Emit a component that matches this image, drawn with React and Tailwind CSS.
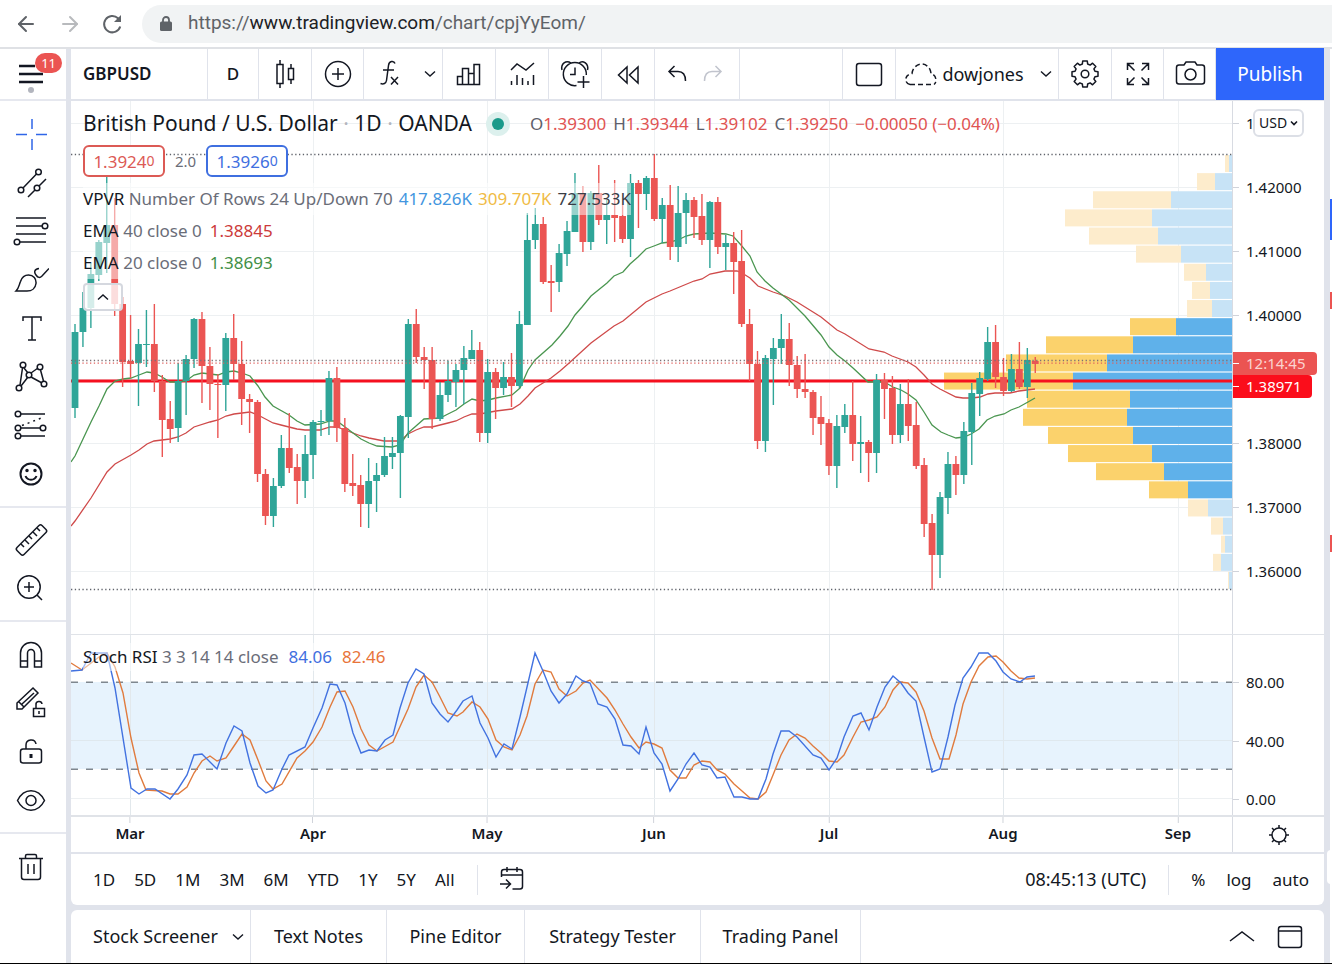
import { ArrowLeft, ArrowRight } from 'lucide-react';

// Candles are evenly spaced, one per trading day: [high, bodyTop, bodyBottom, low, up]
const FIRST_X = 75;
const STEP = 7.936;
const candles = [
  [324, 332, 408, 418, 1], [292, 308, 332, 347, 1], [263, 274, 308, 328, 1], [240, 242, 275, 281, 1],
  [177, 225, 243, 273, 1], [198, 225, 304, 316, 0], [297, 304, 362, 387, 0], [315, 361, 364, 378, 0],
  [329, 344, 363, 406, 1], [310, 344, 345, 367, 1], [304, 344, 381, 392, 0], [375, 381, 420, 457, 0],
  [401, 419, 429, 443, 0], [363, 381, 428, 442, 1], [355, 359, 381, 415, 1], [318, 319, 359, 368, 1],
  [312, 319, 366, 403, 0], [347, 366, 384, 410, 0], [374, 384, 385, 438, 0], [333, 338, 385, 411, 1],
  [314, 338, 364, 380, 0], [341, 364, 399, 425, 0], [394, 399, 402, 433, 0], [400, 402, 474, 482, 0],
  [469, 474, 516, 525, 0], [478, 486, 516, 527, 1], [435, 448, 486, 488, 1], [413, 448, 468, 473, 0],
  [454, 467, 481, 504, 0], [435, 454, 481, 498, 1], [420, 422, 455, 479, 1], [410, 421, 422, 436, 1],
  [371, 378, 421, 435, 1], [367, 378, 428, 442, 0], [418, 428, 484, 492, 0], [454, 483, 486, 496, 0],
  [475, 485, 504, 527, 0], [458, 481, 504, 528, 1], [463, 475, 481, 512, 1], [437, 456, 475, 477, 1],
  [437, 453, 457, 469, 1], [415, 416, 453, 498, 1], [319, 324, 417, 438, 1], [309, 324, 357, 363, 0],
  [347, 357, 360, 389, 0], [347, 360, 419, 429, 0], [382, 395, 419, 421, 1], [361, 381, 395, 402, 1],
  [364, 370, 382, 407, 1], [346, 358, 370, 404, 1], [330, 350, 359, 359, 1], [342, 350, 433, 442, 0],
  [359, 372, 433, 443, 1], [368, 372, 388, 419, 0], [362, 377, 388, 395, 1], [353, 377, 386, 407, 0],
  [311, 324, 386, 388, 1], [213, 240, 325, 325, 1], [208, 224, 240, 249, 1], [217, 224, 282, 284, 0],
  [265, 281, 283, 312, 0], [244, 253, 282, 292, 1], [221, 231, 254, 266, 1], [173, 193, 232, 232, 1],
  [186, 193, 242, 252, 0], [191, 193, 242, 250, 1], [165, 193, 220, 225, 0], [200, 215, 220, 244, 1],
  [180, 215, 218, 242, 0], [205, 216, 239, 243, 0], [174, 183, 239, 257, 1], [180, 183, 194, 228, 0],
  [176, 178, 194, 210, 1], [154, 178, 219, 221, 0], [198, 205, 219, 243, 1], [185, 205, 247, 260, 0],
  [186, 213, 247, 262, 1], [193, 200, 213, 244, 1], [197, 200, 217, 238, 0], [194, 216, 240, 245, 0],
  [201, 202, 240, 268, 1], [197, 202, 247, 254, 0], [235, 243, 247, 270, 1], [232, 243, 262, 294, 0],
  [230, 261, 324, 327, 0], [309, 324, 364, 381, 0], [351, 364, 441, 449, 0], [355, 358, 441, 452, 1],
  [338, 348, 359, 405, 1], [314, 339, 348, 364, 1], [323, 339, 365, 386, 0], [356, 365, 389, 398, 0],
  [354, 389, 392, 398, 0], [390, 392, 418, 435, 0], [396, 417, 424, 445, 0], [419, 423, 466, 475, 0],
  [415, 426, 466, 488, 1], [404, 415, 427, 433, 1], [381, 415, 444, 461, 0], [416, 442, 444, 473, 1],
  [440, 442, 453, 482, 0], [374, 380, 453, 473, 1], [373, 380, 389, 419, 0], [376, 388, 435, 444, 0],
  [384, 404, 435, 443, 1], [379, 404, 426, 441, 0], [402, 425, 466, 469, 0], [458, 465, 524, 537, 0],
  [514, 523, 555, 590, 0], [492, 497, 555, 578, 1], [452, 464, 498, 514, 1], [456, 464, 475, 495, 0],
  [422, 431, 475, 484, 1], [383, 393, 432, 465, 1], [372, 378, 394, 416, 1], [327, 342, 379, 381, 1],
  [325, 342, 377, 388, 0], [358, 377, 391, 396, 0], [354, 369, 391, 392, 1], [342, 369, 387, 389, 0],
  [348, 360, 387, 398, 1], [357, 361, 364, 373, 0],
];

const ema20 =
  '71,462 75,456 83,439 91,422 99,406 107,389 115,381 123,379 131,378 139,375 147,372 154,373 162,377 170,382 178,382 186,381 194,375 202,373 218,375 226,372 234,371 242,373 250,376 258,386 265,397 273,406 289,415 297,421 305,425 320,424 330,421 337,421 345,427 361,439 369,443 377,446 392,447 400,445 408,433 416,426 424,419 440,418 448,414 456,410 464,404 472,399 480,401 488,400 496,398 512,395 520,388 528,370 535,360 552,345 560,336 568,326 575,315 582,307 591,296 607,283 614,276 623,272 630,264 638,257 646,249 654,246 662,243 670,242 678,240 686,236 694,234 710,233 726,234 733,236 741,245 750,256 757,272 765,281 773,288 789,300 805,316 821,335 829,347 837,355 845,361 853,368 868,382 884,382 893,387 901,390 908,394 916,400 924,412 932,425 941,432 948,435 956,438 964,437 971,434 979,429 987,420 995,416 1004,414 1011,410 1019,407 1028,402 1035,398';
const ema40 =
  '71,526 75,521 91,498 107,472 115,464 131,455 139,450 147,444 154,441 162,440 170,439 178,437 186,433 194,427 210,422 218,420 226,416 234,414 250,412 258,415 273,423 281,425 297,429 305,430 320,430 330,427 337,427 345,430 361,436 369,438 384,441 400,441 408,434 416,430 424,427 432,427 440,425 448,423 456,421 464,417 472,414 480,414 496,411 512,409 520,404 528,396 535,388 551,378 560,371 568,364 591,343 614,326 623,321 646,302 662,294 670,291 694,281 702,279 710,274 725,271 737,271 742,273 750,278 758,286 773,292 785,296 797,302 821,317 837,330 845,334 869,349 884,352 892,356 908,362 916,367 924,375 932,384 940,389 956,397 963,398 972,398 980,397 988,394 995,393 1010,393 1019,391 1035,389';

// Volume profile rows: [left edge of down volume, left edge of up volume]
const ROW_TOP = 155;
const ROW_STEP = 18.13;
const profile = [
  [1225, 1229], [1197, 1215], [1093, 1171], [1065, 1152], [1089, 1158], [1136, 1181], [1184, 1206], [1192, 1210],
  [1187, 1212], [1130, 1176], [1046, 1133], [1006, 1107], [944, 1073], [1027, 1130], [1023, 1127], [1048, 1133],
  [1068, 1152], [1096, 1164], [1149, 1188], [1188, 1208], [1211, 1223], [1221, 1225], [1213, 1221], [1228, 1229],
];

const stochK =
  '71,671 82,670 91,653 107,653 115,688 131,788 139,794 147,789 155,789 170,799 178,789 187,775 194,755 202,754 217,769 226,743 234,726 242,731 250,763 258,786 266,793 273,790 282,769 289,755 305,747 313,728 322,708 330,684 337,685 345,703 353,733 361,753 369,750 377,751 385,740 393,735 400,708 408,683 416,669 424,674 432,703 440,714 448,722 457,710 463,701 472,696 480,723 488,738 496,757 504,744 512,749 520,717 535,653 543,671 551,691 559,703 567,694 576,676 583,681 590,683 598,704 607,707 615,719 623,745 631,746 639,754 646,727 654,753 662,764 670,791 678,779 686,764 694,753 702,765 710,767 717,778 725,777 734,797 742,797 750,799 758,799 766,779 773,754 781,731 789,731 797,737 813,755 821,758 829,770 837,758 844,737 853,716 861,713 869,730 877,707 885,687 893,676 901,683 908,693 916,701 924,737 932,772 940,769 948,737 955,705 963,678 971,667 979,653 988,653 996,661 1003,672 1011,679 1020,682 1027,677 1035,676';
const stochD =
  '71,663 82,670 99,657 107,653 115,667 123,693 131,738 139,773 146,790 162,791 170,794 178,794 187,787 194,773 202,761 210,756 217,761 226,758 234,746 242,734 250,740 258,760 266,781 273,789 282,784 297,758 305,751 313,742 322,727 330,707 337,692 345,691 353,707 361,729 369,745 377,751 393,742 408,709 416,687 424,675 432,682 440,697 448,713 457,716 463,712 472,702 480,707 488,719 496,740 504,747 512,750 520,735 527,716 535,684 543,670 551,672 559,689 567,696 576,691 583,683 590,680 607,698 615,710 623,724 631,737 639,748 646,742 654,744 662,748 670,770 678,778 686,778 694,765 702,761 710,762 717,770 725,774 734,784 742,791 750,798 758,799 766,792 773,775 781,755 789,740 797,734 805,738 813,746 821,753 829,761 837,762 844,755 853,737 861,722 869,720 877,717 885,707 893,690 900,682 908,683 916,692 924,711 932,738 940,759 949,759 956,735 963,704 971,682 979,666 988,657 996,656 1003,662 1011,671 1019,678 1027,679 1035,678';

const months = [
  { name: 'Mar', x: 130 },
  { name: 'Apr', x: 313 },
  { name: 'May', x: 487 },
  { name: 'Jun', x: 654 },
  { name: 'Jul', x: 829 },
  { name: 'Aug', x: 1003 },
  { name: 'Sep', x: 1178 },
];

const prices = [
  { label: '1.43000', y: 123 },
  { label: '1.42000', y: 187 },
  { label: '1.41000', y: 251 },
  { label: '1.40000', y: 315 },
  { label: '1.38000', y: 443 },
  { label: '1.37000', y: 507 },
  { label: '1.36000', y: 571 },
];

const stochLevels = [
  { label: '80.00', y: 682 },
  { label: '40.00', y: 741 },
  { label: '0.00', y: 799 },
];

// Eight-toothed gear outline around the middle of the icon box
const gearPoints = [];
for (let i = 0; i < 8; i++) {
  [[-15, 10.3], [-10, 13.2], [10, 13.2], [15, 10.3]].forEach(([turn, r]) => {
    const a = ((i * 45 + turn) * Math.PI) / 180;
    gearPoints.push(`${(18 + r * Math.cos(a)).toFixed(2)},${(18 + r * Math.sin(a)).toFixed(2)}`);
  });
}

function Icon({ children, className = '', width = 1.5 }) {
  return (
    <svg
      width="36"
      height="36"
      viewBox="0 0 36 36"
      fill="none"
      stroke="currentColor"
      strokeWidth={width}
      className={`shrink-0 ${className}`}
      aria-hidden="true"
    >
      {children}
    </svg>
  );
}

function Chevron({ up = false }) {
  return (
    <svg width="12" height="8" viewBox="0 0 12 8" fill="none" stroke="currentColor" strokeWidth="1.400" aria-hidden="true">
      <path d={up ? 'M1 6.500 6 2l5 4.500' : 'M1 1.500 6 6l5-4.500'} />
    </svg>
  );
}

const drawingTools = [
  {
    label: 'Cross',
    active: true,
    icon: <path d="M19 3v10M19 23v11M3 18.500h11M23 18.500h11" />,
  },
  {
    label: 'Trend line tools',
    icon: (
      <>
        <circle cx="25.500" cy="7" r="2.800" />
        <circle cx="8" cy="25" r="2.800" />
        <circle cx="24" cy="23" r="2.800" />
        <path d="M10 23 23.500 9M15 32l7-7M26 21l7-7" />
      </>
    ),
  },
  {
    label: 'Gann and Fibonacci tools',
    icon: (
      <>
        <path d="M3 5h30M3 13h26M3 21h30M7 29h26" />
        <circle cx="32" cy="13" r="2.800" />
        <circle cx="4" cy="29" r="2.800" />
      </>
    ),
  },
  {
    label: 'Brush',
    icon: (
      <path d="M3 29c3-3 3-6 4.500-9.500C9 15 12 13 15.500 13c5 0 8 4 7.500 8.500-.5 4.500-4 7.500-9 7.500H3ZM26 6.500c-5 .5-5 4-3 6.500 2 3 4 3 6 1l7-7.500" />
    ),
  },
  {
    label: 'Text',
    icon: <path d="M10 11V7h18v4M19 7v23M15 30h8" />,
  },
  {
    label: 'Patterns',
    icon: (
      <>
        <circle cx="10" cy="6" r="2.800" />
        <circle cx="27" cy="8" r="2.800" />
        <circle cx="16" cy="16" r="2.800" />
        <circle cx="6" cy="29" r="2.800" />
        <circle cx="31" cy="25" r="2.800" />
        <path d="M11 9l4 5M18 14l7-5M9.500 9 7 26M8 27l7-9M18 18l11 6M27.500 11l3 11" />
      </>
    ),
  },
  {
    label: 'Prediction and measurement tools',
    icon: (
      <>
        <circle cx="5" cy="7" r="2.800" />
        <circle cx="5" cy="21" r="2.800" />
        <circle cx="5" cy="29" r="2.800" />
        <circle cx="30" cy="21" r="2.800" />
        <path d="M8 7h24M8 21h19M8 29h24" />
        <path d="M9 18.500 31 10" strokeDasharray="2 4" />
      </>
    ),
  },
  {
    label: 'Icons',
    icon: (
      <>
        <circle cx="18" cy="18" r="10.500" strokeWidth="2" />
        <circle cx="14" cy="14.500" r="1" fill="currentColor" />
        <circle cx="22" cy="14.500" r="1" fill="currentColor" />
        <path d="M12.500 20c2 5 9 5 11 0" strokeWidth="2" />
      </>
    ),
  },
];

const measureTools = [
  {
    label: 'Measure',
    icon: (
      <>
        <path d="M26 3.500q1.500-1.500 3 0l4 4q1.500 1.500 0 3L11 32.500q-1.500 1.500-3 0l-4-4q-1.500-1.500 0-3Z" />
        <path d="m8 22 3 3M12 18l4 4M16 14l3 3M20 10l4 4M24 6l3 3" />
      </>
    ),
  },
  {
    label: 'Zoom in',
    icon: (
      <>
        <circle cx="16" cy="17" r="11.200" />
        <path d="M16 12v10M11 17h10M24 25l5 5" />
      </>
    ),
  },
];

const modeTools = [
  {
    label: 'Magnet mode',
    icon: (
      <path d="M7.500 31V17a10.500 10.500 0 0 1 21 0v14h-7V17a3.500 3.500 0 0 0-7 0v14ZM7.500 25h7M21.500 25h7" />
    ),
  },
  {
    label: 'Stay in drawing mode',
    icon: (
      <>
        <path d="m4 18 16-15 5 5L9 24H4ZM6 17l5 5M9 19 21 8" />
        <path d="M20.500 23.500h11v8h-11ZM23 23v-3a3 3 0 0 1 6-1M26 26v3" />
      </>
    ),
  },
  {
    label: 'Lock all drawing tools',
    icon: (
      <>
        <rect x="7.500" y="16" width="21" height="14" rx="2.500" />
        <path d="M13 16v-4c0-6 9-7 10-1" />
        <path d="M18 21v4" strokeWidth="3" />
      </>
    ),
  },
  {
    label: 'Hide all drawings',
    icon: (
      <>
        <path d="M4.500 18.500C11 5.500 25 5.500 31.500 18.500 25 31.500 11 31.500 4.500 18.500Z" />
        <circle cx="18" cy="18.500" r="5" />
      </>
    ),
  },
];

function ToolButton({ tool }) {
  return (
    <button
      type="button"
      aria-label={tool.label}
      className={`flex h-12 w-full items-center justify-center pr-1 ${tool.active ? 'text-[#2f66e8]' : 'text-[#131722]'}`}
    >
      <Icon>{tool.icon}</Icon>
    </button>
  );
}

function Sidebar() {
  return (
    <aside className="flex w-[66px] shrink-0 flex-col bg-white">
      <button
        type="button"
        aria-label="Menu, 11 notifications"
        className="relative flex h-[52px] items-center justify-center border-b-2 border-[#e6e8ef] pr-1"
      >
        <Icon width={2.4}>
          <path d="M6 10h16M6 18h24M6 26h24" />
        </Icon>
        <span className="absolute right-1 top-1 rounded-full bg-[#eb5452] px-1.5 text-[13px] leading-5 text-white">11</span>
        <span className="absolute bottom-1.5 left-7 size-1.5 rounded-full bg-[#b2b5be]" />
      </button>
      <div className="flex h-[407px] flex-col justify-between border-b-2 border-[#e6e8ef] pb-2 pt-[9px]">
        {drawingTools.map((tool) => (
          <ToolButton key={tool.label} tool={tool} />
        ))}
      </div>
      <div className="border-b-2 border-[#e6e8ef] py-2">
        {measureTools.map((tool) => (
          <ToolButton key={tool.label} tool={tool} />
        ))}
      </div>
      <div className="flex h-[212px] flex-col justify-between border-b-2 border-[#e6e8ef] py-2">
        {modeTools.map((tool) => (
          <ToolButton key={tool.label} tool={tool} />
        ))}
      </div>
      <div className="py-[9px]">
        <ToolButton
          tool={{
            label: 'Remove drawings',
            icon: (
              <path d="M6 9.500h24M12.500 9V7q0-1.500 1.500-1.500h8q1.500 0 1.500 1.500v2M8.500 10v18q0 2.500 2.500 2.500h14q2.500 0 2.500-2.500V10M15 15v10M21 15v10" />
            ),
          }}
        />
      </div>
    </aside>
  );
}

function BrowserBar() {
  return (
    <header className="flex h-[49px] items-center border-b-2 border-[#dfe1e5] bg-white pl-3.5 text-[#5f6368]">
      <button type="button" aria-label="Back" className="mr-5">
        <ArrowLeft size={24} strokeWidth={2} />
      </button>
      <button type="button" aria-label="Forward" className="mr-[18px] text-[#b8babd]">
        <ArrowRight size={24} strokeWidth={2} />
      </button>
      <button type="button" aria-label="Reload" className="mr-[18px]">
        <svg width="24" height="24" viewBox="0 0 24 24" fill="none" stroke="currentColor" strokeWidth="2" aria-hidden="true">
          <path d="M20.200 14.500A8.200 8.200 0 1 1 18 6.200L20 8.200" />
          <path d="M21 3v7h-7Z" fill="currentColor" stroke="none" />
        </svg>
      </button>
      <div className="flex h-[38px] flex-1 items-center rounded-l-full bg-[#f1f3f4] pl-[18px] font-['Roboto',sans-serif] text-[19px]">
        <svg width="12" height="16" viewBox="0 0 12 16" aria-hidden="true">
          <rect x="0" y="5.500" width="12" height="9.500" rx="1.500" fill="#5f6368" />
          <path d="M3 6V4a3 3 0 0 1 6 0v2" fill="none" stroke="#5f6368" strokeWidth="1.800" />
        </svg>
        <span className="ml-4">
          https://<span className="text-[#202124]">www.tradingview.com</span>/chart/cpjYyEom/
        </span>
      </div>
    </header>
  );
}

function BarButton({ label, className = 'w-[53px]', children }) {
  return (
    <button
      type="button"
      aria-label={label}
      className={`flex h-full shrink-0 items-center justify-center border-r border-[#e0e3eb] ${className}`}
    >
      {children}
    </button>
  );
}

function Toolbar() {
  return (
    <div className="flex h-[52px] items-center border-b-2 border-[#e0e3eb] bg-white">
      <BarButton label="GBPUSD" className="w-[137px] justify-start pl-3 text-[17px] font-semibold">GBPUSD</BarButton>
      <BarButton label="Interval D" className="w-[51px] text-[17px] font-medium">D</BarButton>
      <BarButton label="Candles">
        <Icon>
          <path d="M10 8.500h6v19h-6ZM13 4v4M13 28v4M21.500 12.500h5v11h-5ZM24 8v4M24 24v4" />
        </Icon>
      </BarButton>
      <BarButton label="Compare" className="w-[52px]">
        <Icon>
          <circle cx="18" cy="18" r="12.500" />
          <path d="M18 12v12M12 18h12" />
        </Icon>
      </BarButton>
      <BarButton label="Indicators" className="w-[79px] justify-start gap-4 pl-2">
        <Icon>
          <path d="M23 7.500c-1-3-6-3-6.500 2l-2 15c-.5 3-3 4-6 3M11 14h11M19 21l7 7.500M26 21l-7 7.500" />
        </Icon>
        <Chevron />
      </BarButton>
      <BarButton label="Financials">
        <Icon>
          <path d="M6.500 20.500h5v8h-5ZM11.500 12.500h6v16h-6ZM17.500 17.500h5.500v11h-5.500ZM23 8.500h5.500v20H23Z" />
        </Icon>
      </BarButton>
      <BarButton label="Indicator templates">
        <Icon>
          <path d="m7 14 6-6 9 6 8-7M7.500 25v4M13 19v10M18.500 22v7M24 25v4M29.500 19v10" />
        </Icon>
      </BarButton>
      <BarButton label="Alert">
        <Icon>
          <path d="M19.500 29.500A11.500 11.500 0 1 1 29.300 19M18 11.500v7h-5M5 14C3.500 8 9 3.500 14 7M22 7C26 3.500 32 8 30.500 14M26.500 20v12M20.500 26h12" />
        </Icon>
      </BarButton>
      <BarButton label="Replay">
        <Icon>
          <path d="M17 11v16l-8.500-8ZM28 11v16l-8.500-8Z" />
        </Icon>
      </BarButton>
      <div className="flex h-full w-[85px] shrink-0 items-center justify-center border-r border-[#e0e3eb] pr-1">
        <button type="button" aria-label="Undo">
          <Icon>
            <path d="m15.500 10-5.500 5.500 5.500 5.500M10 15.500h9q7.500 0 7.500 9.500" />
          </Icon>
        </button>
        <button type="button" aria-label="Redo" className="text-[#c1c4cd]">
          <Icon>
            <path d="m20.500 10 5.500 5.500-5.500 5.500M26 15.500h-9q-7.500 0-7.500 9.500" />
          </Icon>
        </button>
      </div>
      <div className="h-full flex-1 border-r border-[#e0e3eb]" />
      <BarButton label="Select layout">
        <Icon>
          <rect x="5.500" y="7.500" width="25" height="22" rx="2.500" />
        </Icon>
      </BarButton>
      <BarButton label="dowjones" className="w-[163px]">
        <Icon>
          <path
            d="M8 28.500h24M8 28.500C2 27 2 19 10 17.500 11 8 23 4 28 13.500c1 2.500 1 4 1 4 6 2 6 9 3 11"
            strokeDasharray="5 3"
          />
        </Icon>
        <span className="ml-1 mr-4 text-[18px]">dowjones</span>
        <Chevron />
      </BarButton>
      <BarButton label="Chart settings">
        <Icon>
          <polygon points={gearPoints.join(' ')} strokeLinejoin="round" />
          <circle cx="18" cy="18" r="3.800" />
        </Icon>
      </BarButton>
      <BarButton label="Fullscreen mode" className="w-[52px]">
        <Icon>
          <path d="M7.500 14V7.500H14M7.500 7.500l7 7M22 7.500h6.500V14M28.500 7.500l-7 7M7.500 22v6.500H14M7.500 28.500l7-7M28.500 22v6.500H22M28.500 28.500l-7-7" />
        </Icon>
      </BarButton>
      <BarButton label="Take a snapshot" className="w-[52px]">
        <Icon>
          <path d="M7 9h5l2-3h9l2 3h5q2.500 0 2.500 2.500v14q0 2.500-2.500 2.500H7q-2.500 0-2.500-2.500v-14Q4.500 9 7 9Z" />
          <circle cx="18.500" cy="18.500" r="5.500" />
        </Icon>
      </BarButton>
      <button type="button" className="h-[52px] w-[108px] shrink-0 bg-[#2e66fb] text-[19px] text-white">
        Publish
      </button>
    </div>
  );
}

function PricePlot() {
  return (
    <svg
      viewBox="71 101 1161 533"
      preserveAspectRatio="none"
      className="block h-[533px] w-full"
      role="img"
      aria-label="GBPUSD daily candles with moving averages and volume profile"
    >
      <g stroke="#edf0f2" strokeWidth="1">
        {months.map((m) => (
          <path key={m.name} d={`M${m.x + 0.5} 101V634`} />
        ))}
        {prices.map((p) => (
          <path key={p.label} d={`M71 ${p.y + 0.5}H1232`} />
        ))}
        <path d="M71 379.500H1232" />
      </g>
      {profile.map(([down, up], i) => {
        const y = ROW_TOP + i * ROW_STEP;
        // rows inside the value area are drawn solid
        const solid = i >= 9 && i <= 18;
        return (
          <g key={i}>
            <rect x={down} y={y} width={up - down} height="17" fill={solid ? '#fbd26c' : '#fdeccc'} />
            <rect x={up} y={y} width={1232 - up} height="17" fill={solid ? '#5fb1ea' : '#c7e3f6'} />
          </g>
        );
      })}
      <path d="M71 381H1232" stroke="#f5101f" strokeWidth="3" />
      <polyline points={ema40} fill="none" stroke="#cf4a4a" strokeWidth="1.300" />
      <polyline points={ema20} fill="none" stroke="#4a9650" strokeWidth="1.300" />
      {candles.map(([high, top, bottom, low, up], i) => {
        const x = FIRST_X + i * STEP;
        const color = up ? '#2fa598' : '#eb5553';
        return (
          <g key={i} fill={color}>
            <rect x={x - 0.7} y={high} width="1.400" height={low - high} />
            <rect x={x - 3.4} y={top} width="6.800" height={Math.max(bottom - top, 1)} />
          </g>
        );
      })}
      <g strokeDasharray="1.300 2.500" strokeWidth="1.300">
        <path d="M71 154.500H1232" stroke="#60636b" />
        <path d="M71 589.500H1232" stroke="#60636b" />
        <path d="M71 360.500H1232" stroke="#7c6f74" />
        <path d="M71 363.200H1232" stroke="#e0605e" />
      </g>
    </svg>
  );
}

function StochPlot() {
  return (
    <svg
      viewBox="71 635 1161 180"
      preserveAspectRatio="none"
      className="block h-[180px] w-full"
      role="img"
      aria-label="Stochastic RSI"
    >
      <rect x="71" y="682" width="1161" height="87" fill="#e7f3fd" />
      <g stroke="#dfe8ee" strokeWidth="1">
        {months.map((m) => (
          <path key={m.name} d={`M${m.x + 0.5} 635V815`} stroke="#e2e8ec" />
        ))}
        <path d="M71 740.500H1232" />
        <path d="M71 798.500H1232" stroke="#edf0f2" />
      </g>
      <path d="M71 682.300H1232M71 769.300H1232" stroke="#7f878f" strokeWidth="1.500" strokeDasharray="7 8" />
      <polyline points={stochD} fill="none" stroke="#e07b3e" strokeWidth="1.400" />
      <polyline points={stochK} fill="none" stroke="#4272e0" strokeWidth="1.400" />
    </svg>
  );
}

function Quote({ className, main, last }) {
  return (
    <button type="button" className={`h-8 w-[82px] rounded-md border-2 bg-white text-[17px] leading-7 ${className}`}>
      {main}
      <span className="align-[2px] text-[14px]">{last}</span>
    </button>
  );
}

function Legend() {
  return (
    <div className="absolute left-3 top-0 text-[#131722]">
      <div className="flex h-[44px] items-center pt-0.5">
        <h1 className="text-[21px]">
          British Pound / U.S. Dollar <span className="text-[#b2b5be]">·</span> 1D{' '}
          <span className="text-[#b2b5be]">·</span> OANDA
        </h1>
        <span className="ml-3.5 flex size-6 items-center justify-center rounded-full bg-[#dcf0ed]">
          <span className="size-3 rounded-full bg-[#1a9a8a]" />
        </span>
        <p className="ml-5 flex gap-[7px] text-[17px] text-[#e05352]">
          <span><span className="text-[#5d606b]">O</span>1.39300</span>
          <span><span className="text-[#5d606b]">H</span>1.39344</span>
          <span><span className="text-[#5d606b]">L</span>1.39102</span>
          <span><span className="text-[#5d606b]">C</span>1.39250</span>
          <span>−0.00050 (−0.04%)</span>
        </p>
      </div>
      <div className="flex h-8 items-center gap-2.5 text-[15px] text-[#6a6d78]">
        <Quote className="border-[#dc5a55] text-[#dc5a55]" main="1.3924" last="0" />
        2.0
        <Quote className="border-[#3f6fe0] text-[#3f6fe0]" main="1.3926" last="0" />
      </div>
      <ul className="mt-1.5 text-[17px] leading-8 text-[#6a6d78]">
        <li className="flex w-max gap-1.5 bg-white/50 text-[#4396e0]">
          <span className="text-[#6a6d78]">
            <span className="text-[#131722]">VPVR</span> Number Of Rows 24 Up/Down 70
          </span>
          <span>417.826K</span>
          <span className="text-[#f0bb45]">309.707K</span>
          <span className="text-[#3a3d46]">727.533K</span>
        </li>
        <li className="flex w-max gap-2 bg-white/50">
          <span><span className="text-[#131722]">EMA</span> 40 close 0</span>
          <span className="text-[#cc3a3a]">1.38845</span>
        </li>
        <li className="flex w-max gap-2 bg-white/50">
          <span><span className="text-[#131722]">EMA</span> 20 close 0</span>
          <span className="text-[#429046]">1.38693</span>
        </li>
      </ul>
      <button
        type="button"
        aria-label="Collapse legend"
        className="mt-1 flex h-7 w-10 items-center justify-center rounded border-2 border-[#d5d8df] bg-white/80"
      >
        <Chevron up />
      </button>
    </div>
  );
}

// Labels sit on their own level of the scale
function ScaleLabel({ y, offset, children }) {
  return (
    <div className="absolute left-0 flex -translate-y-1/2 items-center gap-[7px] text-[15px] leading-5" style={{ top: y - offset }}>
      <span className="h-px w-1.5 bg-[#d0d3da]" />
      {children}
    </div>
  );
}

function PriceScale() {
  return (
    <div className="relative w-[92px] shrink-0 border-l border-[#d8dbe2]">
      {prices.map((p) => (
        <ScaleLabel key={p.label} y={p.y} offset={101}>{p.label}</ScaleLabel>
      ))}
      <div className="absolute left-0 top-[251px] flex h-[23px] w-[84px] items-center gap-[7px] rounded-r bg-[#eb5452] text-[15px] text-[#fbd3d0]">
        <span className="h-px w-1.5 bg-white" />
        12:14:45
      </div>
      <div className="absolute left-0 top-[274px] flex h-[23px] w-[79px] items-center gap-[7px] rounded-r bg-[#fb0d1b] text-[15px] text-white">
        <span className="h-px w-1.5 bg-white" />
        1.38971
      </div>
      <label className="absolute left-5 top-2 flex items-center">
        <select
          aria-label="Currency"
          className="h-7 w-[51px] appearance-none rounded-md border-2 border-[#dcdfe6] bg-white pl-1 text-[14px] leading-5"
        >
          <option>USD</option>
        </select>
        <svg width="8" height="6" viewBox="0 0 8 6" fill="none" stroke="#131722" strokeWidth="1.600" className="pointer-events-none absolute right-1.5">
          <path d="m1 1.500 3 3 3-3" />
        </svg>
      </label>
    </div>
  );
}

function TimeScale() {
  return (
    <div className="flex h-[37px] border-t-2 border-[#e0e3e8]">
      <div className="relative min-w-0 flex-1 text-[15px] font-semibold leading-5">
        {months.map((m) => (
          <div
            key={m.name}
            className="absolute top-0 flex -translate-x-1/2 flex-col items-center"
            style={{ left: `${((m.x - 71) / 1161) * 100}%` }}
          >
            <span className="h-1.5 w-px bg-[#d0d3da]" />
            <span>{m.name}</span>
          </div>
        ))}
      </div>
      <button
        type="button"
        aria-label="Scale settings"
        className="flex w-[92px] shrink-0 items-center justify-center border-l border-[#d8dbe2]"
      >
        <Icon>
          <circle cx="18" cy="18" r="7" />
          <path d="M18 8v3M18 25v3M8 18h3M25 18h3M11 11l2 2M23 23l2 2M11 25l2-2M23 13l2-2" />
        </Icon>
      </button>
    </div>
  );
}

const ranges = ['1D', '5D', '1M', '3M', '6M', 'YTD', '1Y', '5Y', 'All'];

function RangeBar() {
  return (
    <div className="flex h-[53px] items-center border-t-2 border-[#e0e3eb] pl-[22px] pr-[15px] text-[17px]">
      <div className="flex gap-[19px]">
        {ranges.map((r) => (
          <button key={r} type="button">{r}</button>
        ))}
      </div>
      <span className="ml-[22px] mr-4 h-[30px] w-px bg-[#e0e3eb]" />
      <button type="button" aria-label="Go to date">
        <Icon>
          <path d="M7.500 15v-5q0-2.500 2.500-2.500h16q2.500 0 2.500 2.500v14.500q0 2.500-2.500 2.500h-7.500M7.500 13h21M13 5v5M23 5v5M6 22h10M12 17.500l4.500 4.500-4.500 4.500" />
        </Icon>
      </button>
      <button type="button" className="ml-auto text-[18px]">08:45:13 (UTC)</button>
      <span className="mx-[22px] h-[30px] w-px bg-[#e0e3eb]" />
      <div className="flex gap-[21px]">
        <button type="button">%</button>
        <button type="button">log</button>
        <button type="button">auto</button>
      </div>
    </div>
  );
}

function BottomTabs() {
  return (
    <div className="flex h-[53px] items-center rounded-t-md bg-white text-[18px]">
      <BarButton label="Stock Screener" className="w-[180px] gap-3.5 pl-4">
        Stock Screener
        <Chevron />
      </BarButton>
      <BarButton label="Text Notes" className="w-[136px]">Text Notes</BarButton>
      <BarButton label="Pine Editor" className="w-[138px]">Pine Editor</BarButton>
      <BarButton label="Strategy Tester" className="w-[176px]">Strategy Tester</BarButton>
      <BarButton label="Trading Panel" className="w-[160px]">Trading Panel</BarButton>
      <div className="ml-auto flex items-center gap-3 pr-4">
        <button type="button" aria-label="Open panel">
          <Icon>
            <path d="m6 22 12-9 12 9" />
          </Icon>
        </button>
        <button type="button" aria-label="Maximize panel">
          <Icon>
            <path d="M6.500 10q0-2.500 2.500-2.500h18q2.500 0 2.500 2.500v16q0 2.500-2.500 2.500H9q-2.500 0-2.500-2.500ZM6.500 12h23" />
          </Icon>
        </button>
      </div>
    </div>
  );
}

export default function App() {
  return (
    <div className="flex min-h-screen flex-col overflow-hidden border-b border-black bg-[#e0e3eb] font-['Noto_Sans',sans-serif] text-[#131722]">
      <BrowserBar />
      <div className="flex flex-1">
        <Sidebar />
        <main className="ml-[5px] min-w-0 flex-1">
          <div className="rounded-b-md bg-white">
            <Toolbar />
            <div className="flex">
              <div className="relative min-w-0 flex-1">
                <PricePlot />
                <Legend />
              </div>
              <PriceScale />
            </div>
            <div className="flex border-t border-[#e0e3e8]">
              <div className="relative min-w-0 flex-1">
                <StochPlot />
                <p className="absolute left-3 top-2 flex gap-2.5 bg-white/50 text-[17px] leading-7 text-[#6a6d78]">
                  <span><span className="text-[#131722]">Stoch RSI</span> 3 3 14 14 close</span>
                  <span className="text-[#3f6fe0]">84.06</span>
                  <span className="text-[#e8743a]">82.46</span>
                </p>
              </div>
              <div className="relative w-[92px] shrink-0 border-l border-[#d8dbe2]">
                {stochLevels.map((s) => (
                  <ScaleLabel key={s.label} y={s.y} offset={635}>{s.label}</ScaleLabel>
                ))}
              </div>
            </div>
            <TimeScale />
            <RangeBar />
          </div>
          <div className="mt-[5px]">
            <BottomTabs />
          </div>
        </main>
        <div className="relative ml-1.5 w-0.5 bg-white">
          <span className="absolute right-0 top-[150px] h-[41px] w-0.5 bg-[#2e66fb]" />
          <span className="absolute right-0 top-[243px] h-[17px] w-0.5 bg-[#eb5452]" />
          <span className="absolute right-0 top-[486px] h-[17px] w-0.5 bg-[#eb5452]" />
          <button
            type="button"
            aria-label="Show side panel"
            className="absolute right-0 top-[801px] h-[34px] w-[5px] rounded-l bg-white"
          />
        </div>
      </div>
    </div>
  );
}
